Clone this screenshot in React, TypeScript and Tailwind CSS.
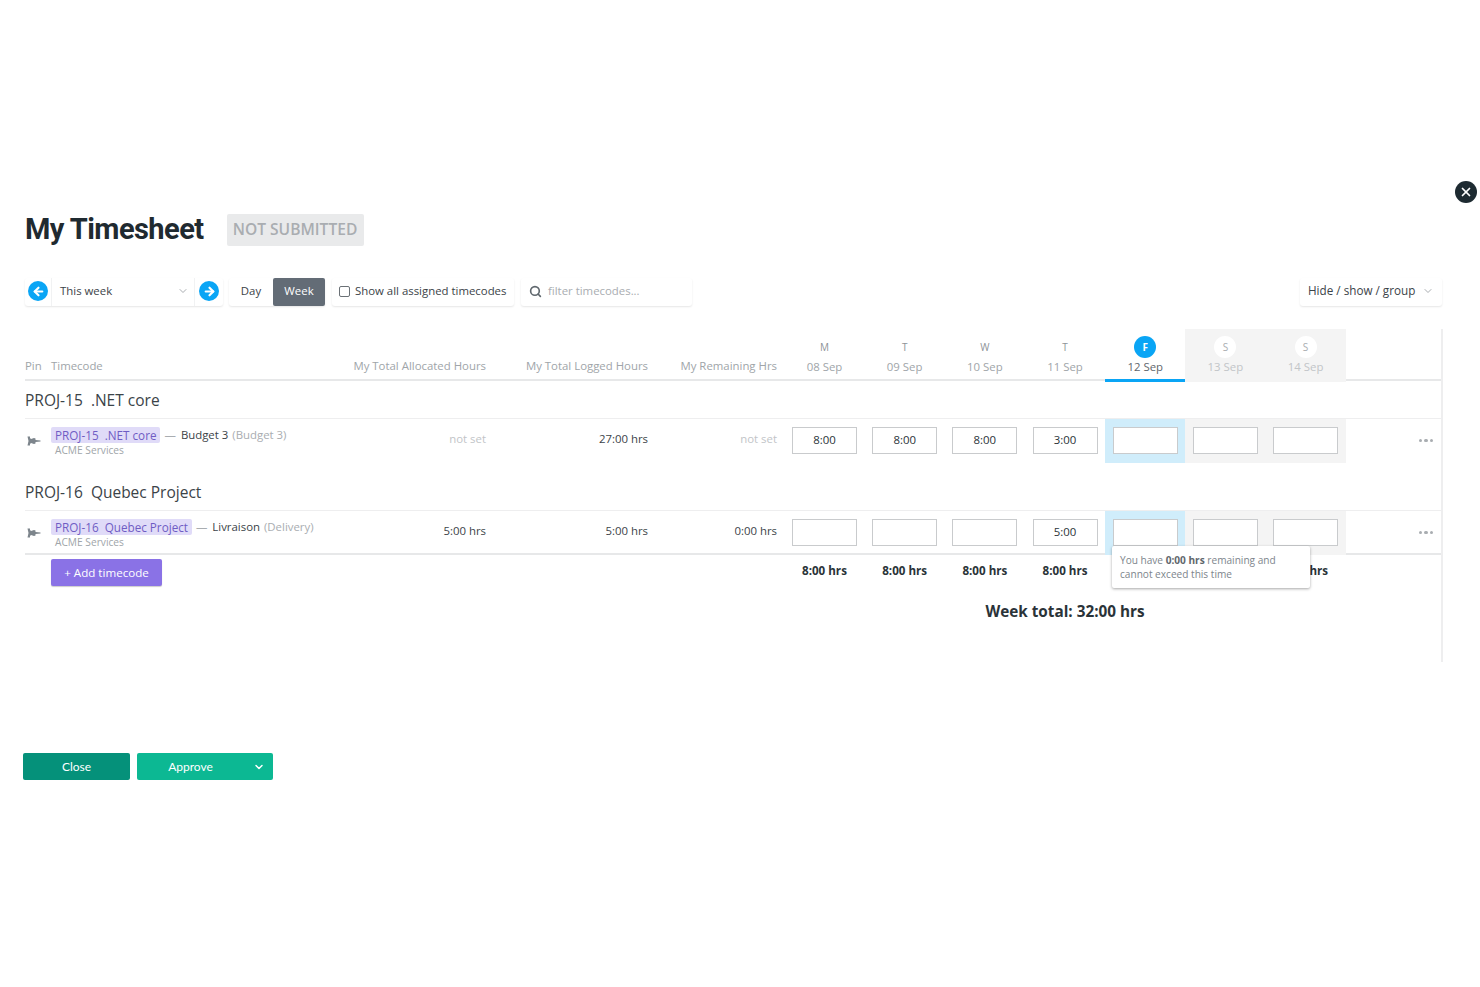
import React from 'react';
import { ArrowLeft, ArrowRight, ChevronDown, Search, X } from 'lucide-react';

const ROW_GRID = 'grid grid-cols-[26px_315px_120px_162px_136.4px_repeat(7,80.2px)_1fr]';

const days = [
  { letter: 'M', date: '08 Sep' },
  { letter: 'T', date: '09 Sep' },
  { letter: 'W', date: '10 Sep' },
  { letter: 'T', date: '11 Sep' },
  { letter: 'F', date: '12 Sep', today: true },
  { letter: 'S', date: '13 Sep', weekend: true },
  { letter: 'S', date: '14 Sep', weekend: true },
];

const PinIcon = () => (
  <svg width="14" height="10" viewBox="0 0 14 10" className="text-[#7d858c]" fill="currentColor">
    <path d="M0.5 0.5 L3 0.5 L3 2 L4 3 L7 2 L8.5 2.5 L8.5 4 L13.5 4.5 L13.5 5.5 L8.5 6 L8.5 7.5 L7 8 L4 7 L3 8 L3 9.5 L0.5 9.5 L1.5 5 Z" />
  </svg>
);

const Dots = () => (
  <span className="flex gap-[2px]">
    <i className="w-[3.5px] h-[3.5px] rounded-full bg-[#a9adb1]" />
    <i className="w-[3.5px] h-[3.5px] rounded-full bg-[#a9adb1]" />
    <i className="w-[3.5px] h-[3.5px] rounded-full bg-[#a9adb1]" />
  </span>
);

const HourCell: React.FC<{ value?: string; index: number }> = ({ value, index }) => (
  <div
    className={`h-11 flex items-start justify-center pt-[8px] ${
      index === 4 ? 'bg-[#d0edfb]' : index > 4 ? 'bg-[#f4f4f4]' : ''
    }`}
  >
    <div className="w-[65px] h-[27px] pb-[1px] bg-white border border-[#c9cbcd] flex items-center justify-center text-[11.4px] text-[#2a3338]">
      {value}
    </div>
  </div>
);

const TimecodeRow: React.FC<{
  code: string;
  task: string;
  taskNote: string;
  allocated: string;
  logged: string;
  remaining: string;
  hours: string[];
  muted?: boolean;
}> = ({ code, task, taskNote, allocated, logged, remaining, hours, muted }) => (
  <div className={`${ROW_GRID} h-11 text-[11.4px] text-[#3b4348]`}>
    <div className="flex items-center pl-[2px]">
      <PinIcon />
    </div>
    <div className="pt-[8px]">
      <div className="flex items-center leading-4">
        <span className="bg-[#e0dbf8] text-[#6f5cc4] text-[11.7px] px-1 rounded-[2px] whitespace-pre">{code}</span>
        <span className="ml-1 mr-[5px] text-[#a9adb1]">—</span>
        <span>{task}</span>
        <span className="ml-1 text-[#a9adb1]">{taskNote}</span>
      </div>
      <div className="text-[10.2px] leading-[14px] pl-1 text-[#a0a5a9]">ACME Services</div>
    </div>
    <div className={`self-center text-right -mt-[5px] ${muted ? 'text-[#c2c5c8]' : ''}`}>{allocated}</div>
    <div className="self-center text-right -mt-[5px]">{logged}</div>
    <div className={`self-center text-right -mt-[5px] pr-[7.4px] ${muted ? 'text-[#c2c5c8]' : ''}`}>{remaining}</div>
    {hours.map((h, i) => (
      <HourCell key={i} value={h} index={i} />
    ))}
    <div className="flex items-center justify-end pr-[8px] pb-[1px]">
      <Dots />
    </div>
  </div>
);

export default function App() {
  return (
    <div className="relative w-[1480px] h-[987px] bg-white overflow-hidden font-['Open_Sans','Noto_Sans',sans-serif] text-[#2a3338]">
      <button className="absolute left-[1455px] top-[181px] w-[22px] h-[22px] rounded-full bg-[#1d2a31] flex items-center justify-center">
        <X size={14} strokeWidth={3} className="text-white" />
      </button>

      <div className="pt-[213px] pl-[25px] pr-[37px]">
        <div className="flex items-center h-[34px]">
          <h1 className="text-[29px] font-bold tracking-[-0.55px] text-[#1f2a30] font-['Roboto',sans-serif]">My Timesheet</h1>
          <span className="ml-[23px] h-8 w-[137px] justify-center flex items-center bg-[#e9eaeb] text-[#a9adb1] text-[15.6px] font-semibold rounded-[2px] whitespace-nowrap">
            NOT SUBMITTED
          </span>
        </div>

        <div className="flex items-center justify-between mt-[30px] h-7 translate-y-[1px] text-[11.4px]">
          <div className="flex items-center">
            <div className="flex items-center h-7 w-[198px] rounded-[3px] shadow-[0_1px_2px_rgba(0,0,0,0.1)]">
              <div className="w-[26px] flex justify-center pb-[2px]">
                <span className="w-5 h-5 rounded-full bg-[#0aa5f5] flex items-center justify-center">
                  <ArrowLeft size={13} strokeWidth={4} className="text-white" />
                </span>
              </div>
              <div className="flex-1 h-full pb-[2px] border-x border-[#f1f2f3] flex items-center justify-between pl-[8px] pr-[3px] text-[#3b4348]">
                This week
                <ChevronDown size={12} className="mr-[2px] text-[#a9adb1]" />
              </div>
              <div className="w-[28px] flex justify-center pb-[2px]">
                <span className="w-5 h-5 rounded-full bg-[#0aa5f5] flex items-center justify-center">
                  <ArrowRight size={13} strokeWidth={4} className="text-white" />
                </span>
              </div>
            </div>

            <div className="ml-[6px] flex h-7 rounded-[3px] shadow-[0_1px_2px_rgba(0,0,0,0.1)]">
              <span className="w-[44px] pb-[2px] flex items-center justify-center text-[#3b4348]">Day</span>
              <span className="w-[52px] pb-[2px] flex items-center justify-center bg-[#636c76] text-white rounded-[2px]">Week</span>
            </div>

            <label className="ml-[7px] h-7 w-[182px] pb-[2px] flex items-center pl-[7px] rounded-[3px] shadow-[0_1px_2px_rgba(0,0,0,0.1)] text-[#3b4348] whitespace-nowrap">
              <span className="w-[11px] h-[11px] border border-[#6b7176] rounded-[2px] mr-[5px]" />
              Show all assigned timecodes
            </label>

            <div className="ml-[7px] h-7 w-[171px] pb-[2px] flex items-center pl-[8px] rounded-[3px] shadow-[0_1px_2px_rgba(0,0,0,0.1)] text-[#a9adb1]">
              <Search size={13} strokeWidth={3} className="text-[#5f676d] mr-[6px]" />
              filter timecodes...
            </div>
          </div>

          <div className="h-7 w-[142px] pb-[2px] mr-[1px] flex items-center justify-between pl-2 pr-[8px] text-[11.7px] rounded-[3px] shadow-[0_1px_2px_rgba(0,0,0,0.1)] text-[#3b4348]">
            Hide / show / group
            <ChevronDown size={12} className="text-[#a9adb1]" />
          </div>
        </div>

        <div className="mt-[24px] h-[333px] border-r-2 border-[#eeeeef] relative">
          <div className={`${ROW_GRID} h-[52px] border-b-2 border-[#e7e8e9] text-[11.4px] text-[#a0a5a9]`}>
            <div className="pt-[28px]">Pin</div>
            <div className="pt-[28px]">Timecode</div>
            <div className="pt-[28px] flex justify-end whitespace-nowrap">My Total Allocated Hours</div>
            <div className="pt-[28px] flex justify-end whitespace-nowrap">My Total Logged Hours</div>
            <div className="pt-[28px] flex justify-end pr-[7.4px] whitespace-nowrap">My Remaining Hrs</div>
            {days.map((d) => (
              <div
                key={d.date}
                className={`flex flex-col items-center h-[53px] pt-[7px] ${
                  d.today ? 'border-b-[3px] border-[#0aa5f5] text-[#5f676d]' : ''
                } ${d.weekend ? 'bg-[#f4f4f4] text-[#c2c5c8]' : ''}`}
              >
                <span
                  className={`w-[22px] h-[22px] rounded-full flex items-center justify-center text-[10px] ${
                    d.today ? 'bg-[#0aa5f5] text-white font-bold' : d.weekend ? 'bg-white text-[#a9adb1]' : 'text-[#8d9397]'
                  }`}
                >
                  {d.letter}
                </span>
                <span>{d.date}</span>
              </div>
            ))}
            <div />
          </div>

          <div className="h-[38px] pt-[2px] flex items-center text-[15.5px] text-[#3b4348] border-b border-[#eeeeef] whitespace-pre">
            {'PROJ-15  .NET core'}
          </div>
          <TimecodeRow
            code="PROJ-15  .NET core"
            task="Budget 3"
            taskNote="(Budget 3)"
            allocated="not set"
            logged="27:00 hrs"
            remaining="not set"
            hours={['8:00', '8:00', '8:00', '3:00', '', '', '']}
            muted
          />

          <div className="h-[48px] pt-[12px] flex items-center text-[15.5px] text-[#3b4348] border-b border-[#eeeeef] whitespace-pre">
            {'PROJ-16  Quebec Project'}
          </div>
          <TimecodeRow
            code="PROJ-16  Quebec Project"
            task="Livraison"
            taskNote="(Delivery)"
            allocated="5:00 hrs"
            logged="5:00 hrs"
            remaining="0:00 hrs"
            hours={['', '', '', '5:00', '', '', '']}
          />

          <div className={`${ROW_GRID} h-[34px] border-t-2 border-[#e7e8e9] -mt-[2px] text-[11.6px] font-bold text-[#2a3338]`}>
            <div className="col-span-5 pl-[26px] pt-[4px]">
              <button className="w-[111px] h-[27px] rounded-[2px] bg-[#8a72e6] text-white text-[11.6px] font-normal shadow-[0_1px_1px_rgba(0,0,0,0.2)]">
                + Add timecode
              </button>
            </div>
            {['8:00 hrs', '8:00 hrs', '8:00 hrs', '8:00 hrs', '', '', '8:00 hrs'].map((t, i) => (
              <div key={i} className="text-center pt-[7px]">{t}</div>
            ))}
          </div>

          <div className="pl-[960px] w-[1120px] mt-[13px] text-center text-[15.3px] font-bold text-[#2a3338] whitespace-nowrap">
            Week total: 32:00 hrs
          </div>

          <div className="absolute left-[1087px] top-[217px] w-[198px] h-[42px] bg-white rounded-[2px] shadow-[0_1px_3px_rgba(0,0,0,0.35)] px-2 py-[7px] text-[10.1px] leading-[14px] text-[#7d858c]">
            You have <b className="text-[#5f676d]">0:00 hrs</b> remaining and cannot exceed this time
          </div>
        </div>

        <div className="flex mt-[91px] -ml-[2px] text-xs text-white font-['Lato',sans-serif]">
          <button className="w-[107px] h-[27px] rounded-[2px] bg-[#05917a]">Close</button>
          <div className="ml-[7px] w-[136px] h-[27px] rounded-[2px] bg-[#0cb893] flex items-center">
            <span className="flex-1 text-center -ml-[1px]">Approve</span>
            <span className="w-[28px] flex justify-center">
              <ChevronDown size={12} strokeWidth={3} />
            </span>
          </div>
        </div>
      </div>
    </div>
  );
}
